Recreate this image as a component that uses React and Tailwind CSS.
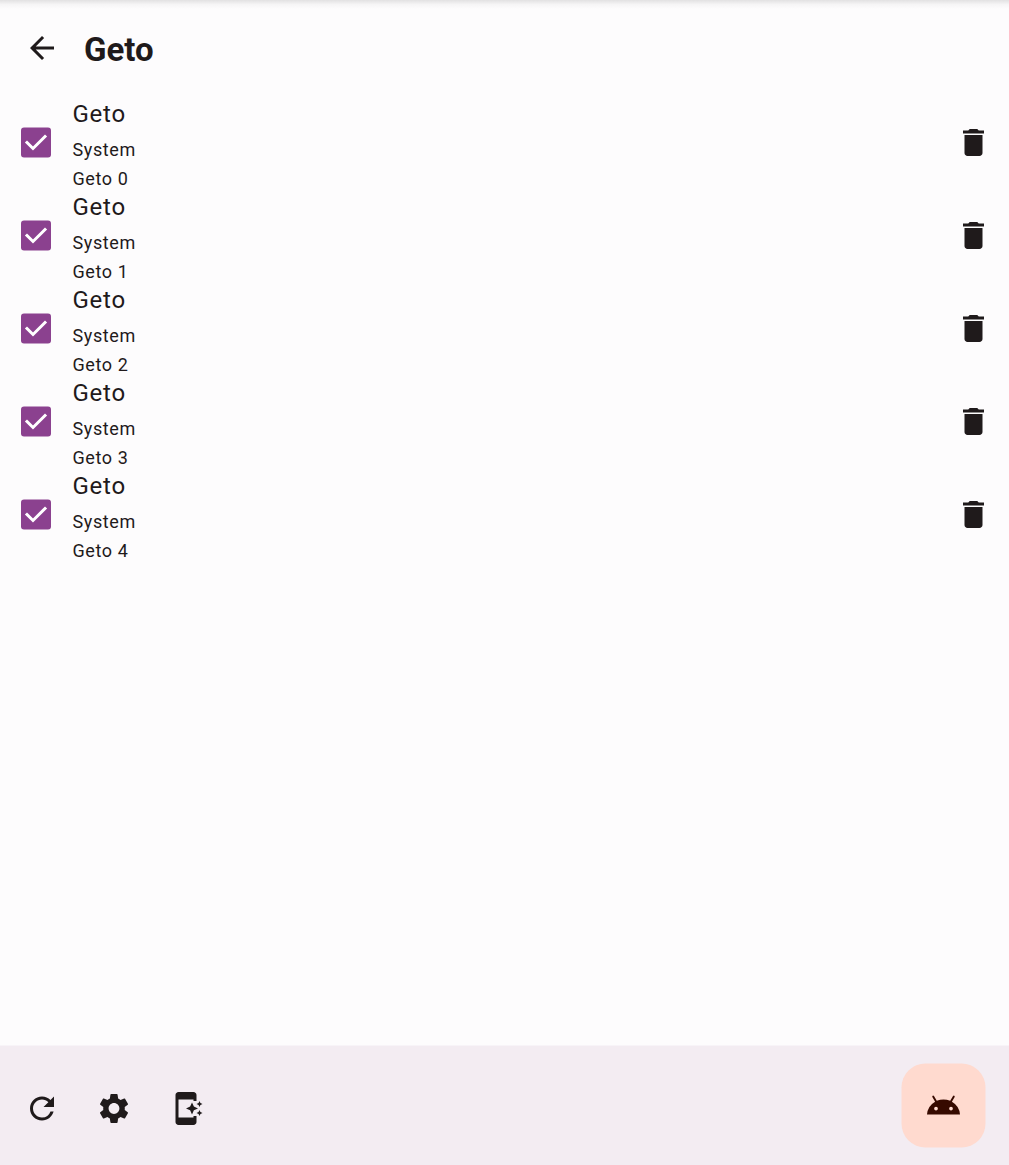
import React from "react";
import { MdArrowBack, MdDelete, MdRefresh, MdSettings, MdAppShortcut } from "react-icons/md";

const items = [0, 1, 2, 3, 4];

function IconButton({ label, children }) {
  return (
    <button aria-label={label} className="flex h-[72px] w-[72px] items-center justify-center text-[36px]">
      {children}
    </button>
  );
}

function SettingRow({ index }) {
  return (
    <li className="flex h-[93px] items-center">
      <span role="checkbox" aria-checked="true" className="ml-[21px] h-[30px] w-[30px] shrink-0">
        <svg viewBox="0 0 30 30" className="block h-[30px] w-[30px] overflow-visible">
          <rect x="0" y="-0.5" width="30" height="30" rx="3" fill="#8b418f" />
          <path d="M6 14.5 L12 20.5 L24 8.5" fill="none" stroke="#ffffff" strokeWidth="3" strokeLinecap="square" />
        </svg>
      </span>
      <div className="ml-[21.5px] flex h-[93px] grow flex-col">
        <span className="text-[24px] leading-[36px] tracking-[0.75px]">Geto</span>
        <span className="mt-[6px] text-[18px] leading-[24px] tracking-[0.6px]">System</span>
        <span className="mt-[5px] text-[18px] leading-[24px] tracking-[0.6px]">{`Geto ${index}`}</span>
      </div>
      <div className="pb-px">
        <IconButton label="Delete">
          <MdDelete viewBox="-0.333 -0.333 24 24" />
        </IconButton>
      </div>
    </li>
  );
}

export default function App() {
  return (
    <div className="flex h-[1165px] w-[1009px] flex-col overflow-hidden bg-[#fdfcfd] font-['Roboto',sans-serif] text-[#1f1a1b]">
      <div className="h-[9px] bg-linear-to-b from-[#e2e1e2] via-[#f6f5f6] to-[#fdfcfd]" />
      <header className="flex h-[87px] items-center pb-[9px] pl-[6px]">
        <IconButton label="Back">
          <MdArrowBack />
        </IconButton>
        <h1 className="ml-[6px] pt-[4px] text-[33px] font-bold leading-[42px]">Geto</h1>
      </header>
      <ul className="grow">
        {items.map((index) => (
          <SettingRow key={index} index={index} />
        ))}
      </ul>
      <footer className="flex h-[120px] items-start justify-between border-t border-[#f8f4f8] bg-[#f3ecf2] pl-[6px] pr-[24px]">
        <div className="flex pt-[26px]">
          <IconButton label="Refresh">
            <MdRefresh viewBox="0 -0.333 24 24" />
          </IconButton>
          <IconButton label="Settings">
            <MdSettings viewBox="0 -0.333 24 24" />
          </IconButton>
          <IconButton label="Shortcut">
            <MdAppShortcut viewBox="0 -0.333 24 24" />
          </IconButton>
        </div>
        <button aria-label="Launch" className="mt-[17px] h-[84px] w-[84px]">
          <svg viewBox="0 0 84 84" className="block h-[84px] w-[84px] overflow-visible">
            <g transform="translate(0.5 0.5)">
              <rect width="84" height="84" rx="24" fill="#ffdacf" />
              <path
                transform="translate(24 24) scale(1.5)"
                fill="#360a00"
                d="M17.6 9.48l1.84-3.18c.16-.31.04-.69-.26-.85a.637.637 0 0 0-.83.22l-1.88 3.24a11.463 11.463 0 0 0-8.94 0L5.65 5.67a.643.643 0 0 0-.87-.2c-.28.18-.37.54-.22.83L6.4 9.48A10.78 10.78 0 0 0 1 18h22a10.78 10.78 0 0 0-5.4-8.52zM7 15.25a1.25 1.25 0 1 1 0-2.5 1.25 1.25 0 0 1 0 2.5zm10 0a1.25 1.25 0 1 1 0-2.5 1.25 1.25 0 0 1 0 2.5z"
              />
            </g>
          </svg>
        </button>
      </footer>
    </div>
  );
}
